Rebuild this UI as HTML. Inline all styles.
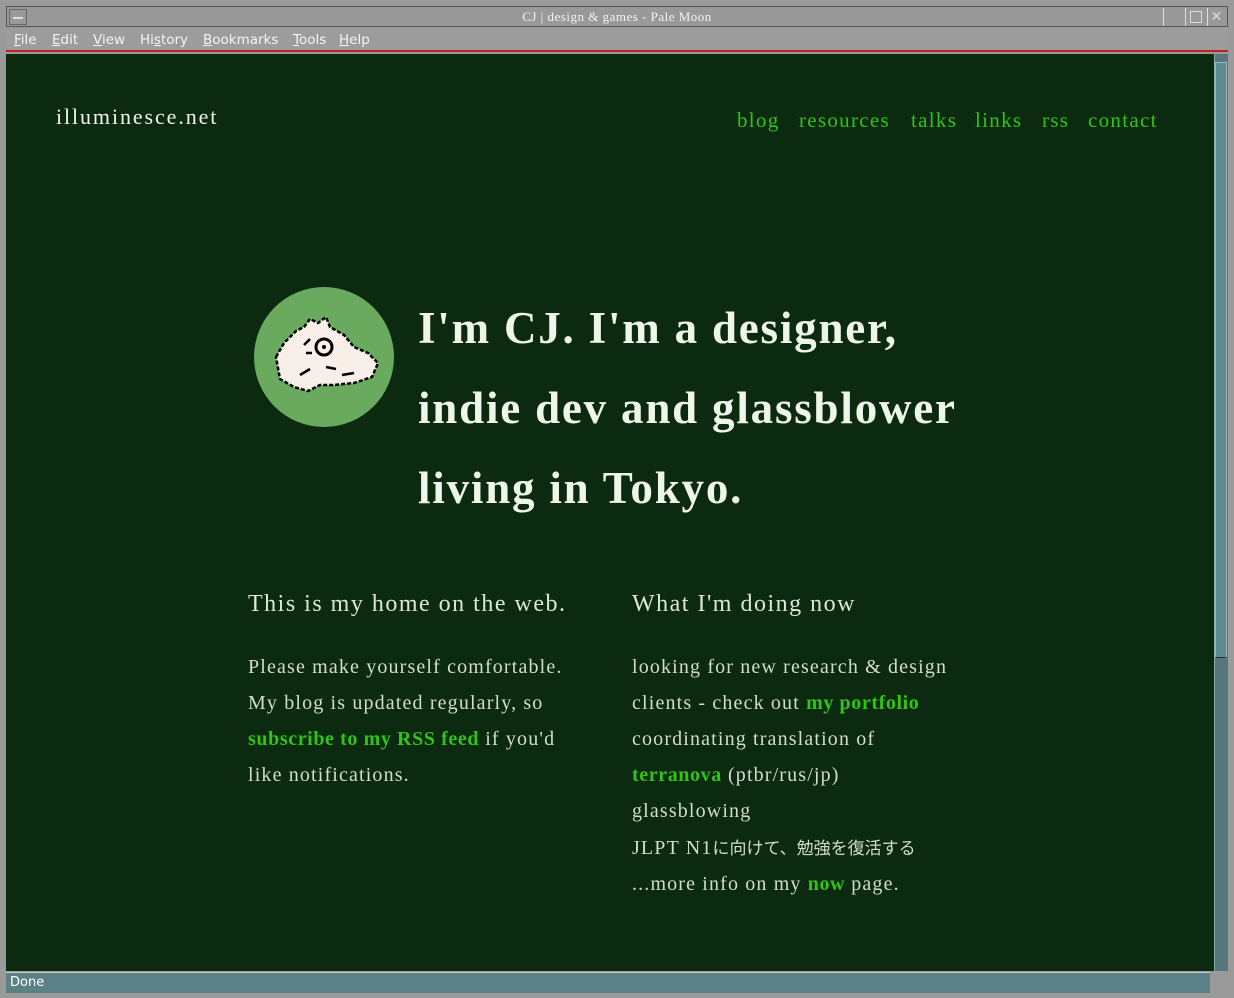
<!DOCTYPE html>
<html><head><meta charset="utf-8"><style>
*{margin:0;padding:0;box-sizing:border-box}
body{width:1234px;height:998px;background:#9a9a9a;position:relative;overflow:hidden;font-family:"Liberation Serif","Noto Serif CJK SC",serif}
.abs{position:absolute}
#title{left:6px;top:6px;width:1222px;height:21px;background:#999;border:1px solid #555;}
#title .t{position:absolute;left:0;right:0;top:2px;text-align:center;font:13px "Liberation Serif",serif;color:#f4f4f4;letter-spacing:0.5px}
#menu{left:6px;top:28px;width:1222px;height:24px;background:#9c9c9c;border-bottom:2px solid #c02020;font:13.5px "DejaVu Sans",sans-serif;color:#f4f4f4}
#menu span{position:absolute;top:4px}
#content{left:6px;top:54px;width:1208px;height:917px;background:#0c2a10;}
#sb{left:1214px;top:54px;width:14px;height:917px;background:#56787c;border-left:1px solid #8aa}
#thumb{left:1215px;top:62px;width:12px;height:596px;background:#5f8a90;border:1px solid #9bb;border-bottom-color:#234}
#status{left:6px;top:972px;width:1204px;height:21px;background:#5b8086;border-top:1px solid #ccc;color:#fff;font:13px "DejaVu Sans",sans-serif;padding:2px 4px}
.g{color:#2fc516;font-weight:bold;letter-spacing:0.6px}
.nav{top:108px;font-size:21px;color:#2fc516;letter-spacing:1.3px}
.hero{left:418px;top:288px;font-size:45px;font-weight:bold;line-height:80px;color:#eef6ea;letter-spacing:1.8px}
.h2{top:591px;font-size:24px;color:#dde6da;letter-spacing:1.5px}
.p{top:649px;font-size:20px;line-height:36px;color:#d2dccf;letter-spacing:1.15px;white-space:nowrap}
.jp{font-family:"Noto Sans CJK JP",sans-serif;font-size:17px;letter-spacing:0}
</style></head><body>
<div id="title" class="abs"><div class="t">CJ | design &amp; games - Pale Moon</div>
<div class="abs" style="left:2px;top:2px;width:18px;height:16px;border:1px solid #666"><div class="abs" style="left:3px;top:7px;width:10px;height:2px;background:#ddd"></div></div>
<div class="abs" style="right:44px;top:1px;width:20px;height:18px;border-left:1px solid #ddd"></div>
<div class="abs" style="right:22px;top:1px;width:20px;height:18px;border-left:1px solid #ddd"><div class="abs" style="left:4px;top:3px;width:12px;height:12px;border:1px solid #ddd"></div></div>
<div class="abs" style="right:2px;top:1px;width:18px;height:18px;border-left:1px solid #ddd;color:#ddd;font:14px sans-serif;text-align:center">✕</div>
</div>
<div id="menu" class="abs">
<span style="left:8px"><u>F</u>ile</span><span style="left:46px"><u>E</u>dit</span><span style="left:87px"><u>V</u>iew</span><span style="left:134px">Hi<u>s</u>tory</span><span style="left:197px"><u>B</u>ookmarks</span><span style="left:287px"><u>T</u>ools</span><span style="left:333px"><u>H</u>elp</span>
</div>
<div id="content" class="abs"></div>
<div id="sb" class="abs"></div><div id="thumb" class="abs"></div>
<div id="status" class="abs">Done</div>

<div class="abs" style="left:56px;top:104px;font-size:22px;color:#eef4ea;letter-spacing:1.9px">illuminesce.net</div>
<div class="abs nav" style="left:737px">blog</div>
<div class="abs nav" style="left:799px">resources</div>
<div class="abs nav" style="left:911px">talks</div>
<div class="abs nav" style="left:975px">links</div>
<div class="abs nav" style="left:1042px">rss</div>
<div class="abs nav" style="left:1088px">contact</div>

<svg class="abs" style="left:254px;top:287px" width="140" height="140" viewBox="0 0 140 140">
<circle cx="70" cy="70" r="70" fill="#6aaa5e"/>
<path d="M22 70 L30 56 L42 44 L50 40 L56 32 L64 36 L72 30 L76 40 L90 48 L100 60 L114 66 L124 76 L118 90 L100 96 L80 98 L66 98 L54 104 L40 100 L26 92 Z" fill="#f7efe8" stroke="#000" stroke-width="2.5" stroke-dasharray="4 2"/>
<circle cx="70" cy="60" r="8" fill="none" stroke="#000" stroke-width="3"/>
<circle cx="70" cy="60" r="2" fill="#000"/>
<path d="M50 58 L56 52 M52 66 L58 66 M72 80 L82 82 M88 88 L100 86 M46 88 L56 82" stroke="#000" stroke-width="2.5"/>
</svg>

<div class="abs hero">I'm CJ. I'm a designer,<br>indie dev and glassblower<br>living in Tokyo.</div>

<div class="abs h2" style="left:248px">This is my home on the web.</div>
<div class="abs h2" style="left:632px">What I'm doing now</div>
<div class="abs p" style="left:248px">Please make yourself comfortable.<br>My blog is updated regularly, so<br><span class="g">subscribe to my RSS feed</span> if you'd<br>like notifications.</div>
<div class="abs p" style="left:632px">looking for new research &amp; design<br>clients - check out <span class="g">my portfolio</span><br>coordinating translation of<br><span class="g">terranova</span> (ptbr/rus/jp)<br>glassblowing<br>JLPT N1<span class="jp">に向けて、勉強を復活する</span><br>...more info on my <span class="g">now</span> page.</div>
</body></html>
